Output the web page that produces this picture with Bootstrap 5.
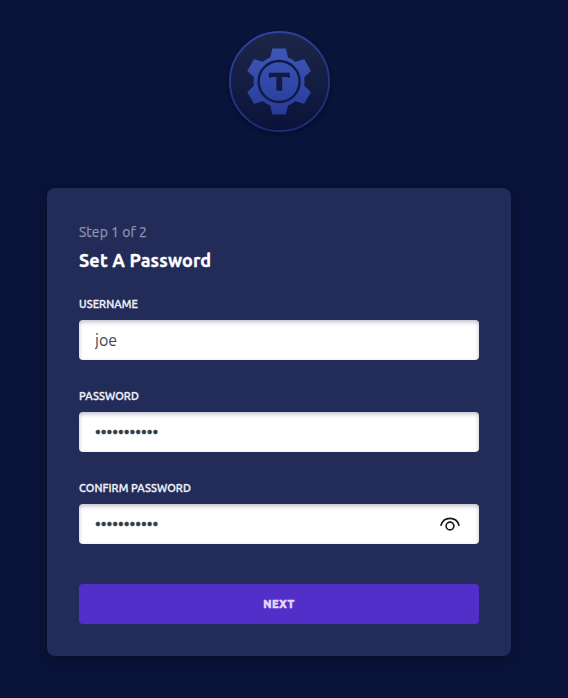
<!DOCTYPE html>
<html lang="en">
<head>
<meta charset="utf-8">
<meta name="viewport" content="width=device-width, initial-scale=1">
<title>Set A Password</title>
<link href="https://cdn.jsdelivr.net/npm/bootstrap@5.3.0/dist/css/bootstrap.min.css" rel="stylesheet">
<style>
  body { background: #0a1339; font-family: Ubuntu, "Noto Sans", sans-serif; min-height: 698px; padding-right: 10px; overflow: hidden; }
  .brand { width: 102px; height: 102px; margin-top: 30px; margin-bottom: 56px; overflow: visible; }
  .panel { width: 464px; height: 468px; padding: 33px 32px 32px; background: #232c58; border-radius: 8px; box-shadow: 0 4px 14px rgba(0,0,0,.24); }
  .step { font-size: 14px; line-height: 22px; color: #8b94af; letter-spacing: .03px; -webkit-text-stroke: .25px #8b94af; }
  .title { font-size: 18px; line-height: 26px; font-weight: 700; color: #fff; margin: 4px 0 23px; letter-spacing: .15px; -webkit-text-stroke: .3px #fff; }
  .field-label { display: block; width: max-content; font-size: 11px; line-height: 16px; font-weight: 500; color: #f1f3fb; margin-bottom: 8px; text-transform: uppercase; letter-spacing: .06px; -webkit-text-stroke: .3px #f1f3fb; }
  .field { height: 40px; border: 0; border-radius: 4px; padding: 0 16px; font-size: 16px; color: #3b4453; background: #fff; box-shadow: inset 0 2px 4px rgba(20,25,60,.28); }
  .field-group { margin-bottom: 28px; }
  .field[type=password] { color: #323d49; font-size: 16px; -webkit-text-stroke: .4px #323d49; }
  .eye { right: 18px; top: 10px; width: 22px; height: 20px; }
  .next { height: 40px; margin-top: 40px; border: 0; border-radius: 4px; background: #522fc8; color: #e4dcff; font-size: 11px; font-weight: 800; padding: 0; letter-spacing: .4px; -webkit-text-stroke: .5px #e4dcff; }
</style>
<script src="https://cdn.jsdelivr.net/npm/bootstrap@5.3.0/dist/js/bootstrap.bundle.min.js"></script>
</head>
<body class="d-flex flex-column align-items-center">
<svg class="brand flex-shrink-0" viewBox="0 0 102 102" aria-hidden="true">
  <defs>
    <linearGradient id="face" x1="0" y1="0" x2="0" y2="1"><stop offset="0" stop-color="#1d2749"/><stop offset="1" stop-color="#0a123a"/></linearGradient>
    <linearGradient id="rim" x1="0" y1="0" x2="0.3" y2="1"><stop offset="0" stop-color="#3046a8"/><stop offset="1" stop-color="#202b7c"/></linearGradient>
    <linearGradient id="gear" gradientUnits="userSpaceOnUse" x1="0" y1="-33" x2="0" y2="33"><stop offset="0" stop-color="#3d57b9"/><stop offset="1" stop-color="#283a98"/></linearGradient>
    <filter id="soft" x="-20%" y="-20%" width="140%" height="140%"><feGaussianBlur stdDeviation="2"/></filter>
  </defs>
  <circle cx="51.5" cy="54" r="50" fill="#040a22" opacity=".6" filter="url(#soft)"/>
  <circle cx="51.5" cy="51.6" r="49.6" fill="url(#face)" stroke="url(#rim)" stroke-width="1.8"/>
  <g transform="translate(51.1 51.5)">
    <path fill="url(#gear)" stroke="url(#gear)" stroke-width="1.4" stroke-linejoin="round" d="M-6.2-32.2H6.2L8.4-23.2Q11.9-22.3 15.9-18.9L24.8-21.5L31-10.7L24.3-4.3Q25.2 0 24.3 4.3L31 10.7L24.8 21.5L15.9 18.9Q11.9 22.3 8.4 23.2L6.2 32.2H-6.2L-8.4 23.2Q-11.9 22.3-15.9 18.9L-24.8 21.5L-31 10.7L-24.3 4.3Q-25.2 0-24.3-4.3L-31-10.7L-24.8-21.5L-15.9-18.9Q-11.9-22.3-8.4-23.2Z"/>
    <circle r="20.5" fill="none" stroke="#111a43" stroke-width="2.4"/>
    <path fill="#111a43" d="M-10.3-8.8H10.7V-4.4L9.4-3.3L8.2-4.5H3.1V9.3H-2.7V-4.5H-7.8L-9-3.3L-10.3-4.4Z"/>
  </g>
</svg>
<main class="panel flex-shrink-0">
  <div class="step"><span>Step 1 of 2</span></div>
  <h1 class="title"><span>Set A Password</span></h1>
  <form>
    <div class="field-group">
      <label class="field-label" for="user">Username</label>
      <input class="form-control field" id="user" type="text" value="joe">
    </div>
    <div class="field-group">
      <label class="field-label" for="pass">Password</label>
      <input class="form-control field" id="pass" type="password" value="elevenchars">
    </div>
    <div>
      <label class="field-label" for="confirm">Confirm Password</label>
      <div class="position-relative">
        <input class="form-control field" id="confirm" type="password" value="elevenchars">
        <svg class="eye position-absolute" viewBox="0 0 22 20" fill="none" stroke="#17191d" stroke-width="1.6" stroke-linecap="round" aria-hidden="true"><path d="M2 11.2C3.5 6.5 7 4.4 11 4.4S18.5 6.5 20 11.2"/><circle cx="11" cy="12" r="3.9"/></svg>
      </div>
    </div>
    <button class="btn next w-100" type="button">NEXT</button>
  </form>
</main>
</body>
</html>
